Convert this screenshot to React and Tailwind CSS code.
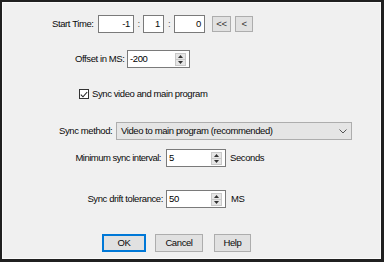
import React from 'react';

const font = { fontFamily: '"Liberation Sans", Arial, sans-serif' };

const Spinner = () => (
  <div className="flex flex-col w-[11px] h-[13px] border border-[#c9c9c9] bg-[#e6e6e6] mr-[3px]">
    <div className="flex-1 flex items-center justify-center border-b border-[#c9c9c9]">
      <svg width="5" height="3" viewBox="0 0 5 3"><path d="M0 3 L2.5 0 L5 3 Z" fill="#333" /></svg>
    </div>
    <div className="flex-1 flex items-center justify-center">
      <svg width="5" height="3" viewBox="0 0 5 3"><path d="M0 0 L2.5 3 L5 0 Z" fill="#333" /></svg>
    </div>
  </div>
);

const SpinBox = ({ value, width }) => (
  <div className={`flex items-center h-[18px] bg-white border border-[#7a7a7a] ${width}`}>
    <span className="flex-1 pl-[2px] text-black">{value}</span>
    <Spinner />
  </div>
);

const TimeBox = ({ value, width }) => (
  <div className={`flex items-center justify-end h-[18px] bg-white border border-[#7a7a7a] pr-[3px] ${width}`}>
    {value}
  </div>
);

const SmallBtn = ({ children, width }) => (
  <div className={`flex items-center justify-center h-[16px] bg-[#e1e1e1] border border-[#adadad] text-[#333] ${width}`}>
    {children}
  </div>
);

const Btn = ({ children, primary, width }) => (
  <div
    className={`flex items-center justify-center h-[18px] bg-[#e1e1e1] ${width} ${
      primary ? 'border-2 border-[#0078d7]' : 'border border-[#adadad]'
    }`}
  >
    {children}
  </div>
);

export default function App() {
  return (
    <div className="w-[384px] h-[262px] bg-[#202020] pt-[2px] pl-[2px] pr-[3px] pb-[3px]" style={font}>
      <div className="w-full h-full bg-[#f0f0f0] border border-[#fafafa] text-[9.5px] tracking-[-0.4px] whitespace-nowrap text-[#0a0a0a] leading-none flex flex-col">
        {/* Start time */}
        <div className="flex items-center mt-[12px] pl-[49px] h-[18px]">
          <span className="w-[46px]">Start Time:</span>
          <TimeBox value="-1" width="w-[36px]" />
          <span className="w-[9px] text-center text-[#555]">:</span>
          <TimeBox value="1" width="w-[21px]" />
          <span className="w-[10px] text-center text-[#555]">:</span>
          <TimeBox value="0" width="w-[31px]" />
          <SmallBtn width="w-[19px] ml-[7px]">&lt;&lt;</SmallBtn>
          <SmallBtn width="w-[18px] ml-[4px]">&lt;</SmallBtn>
        </div>

        {/* Offset */}
        <div className="flex items-center mt-[17px] pl-[72px] h-[18px]">
          <span className="w-[52px]">Offset in MS:</span>
          <SpinBox value="-200" width="w-[63px]" />
        </div>

        {/* Sync checkbox */}
        <div className="flex items-center mt-[20px] pl-[76px] h-[12px]">
          <div className="w-[10px] h-[10px] border border-[#333] bg-white flex items-center justify-center">
            <svg width="8" height="7" viewBox="0 0 8 7">
              <path d="M0.8 3.6 L3 5.8 L7.2 1" fill="none" stroke="#222" strokeWidth="1.1" />
            </svg>
          </div>
          <span className="ml-[3px]">Sync video and main program</span>
        </div>

        {/* Sync method */}
        <div className="flex items-center mt-[22px] pl-[56px] h-[18px]">
          <span className="w-[57px]">Sync method:</span>
          <div className="flex items-center w-[236px] h-[18px] bg-[#e5e5e5] border border-[#adadad] pl-[4px] pr-[4px]">
            <span className="flex-1">Video to main program (recommended)</span>
            <svg width="8" height="5" viewBox="0 0 8 5">
              <path d="M0.5 0.5 L4 4 L7.5 0.5" fill="none" stroke="#555" strokeWidth="1" />
            </svg>
          </div>
        </div>

        {/* Minimum sync interval */}
        <div className="flex items-center mt-[9px] pl-[72px] h-[18px]">
          <span className="w-[91px] text-right pr-[5px] tracking-[-0.5px]">Minimum sync interval:</span>
          <SpinBox value="5" width="w-[60px]" />
          <span className="ml-[4px]">Seconds</span>
        </div>

        {/* Drift tolerance */}
        <div className="flex items-center mt-[23px] pl-[80px] h-[18px]">
          <span className="w-[83px] text-right pr-[3px]">Sync drift tolerance:</span>
          <SpinBox value="50" width="w-[60px]" />
          <span className="ml-[5px]">MS</span>
        </div>

        {/* Buttons */}
        <div className="flex items-center mt-[26px] pl-[99px] h-[18px]">
          <Btn primary width="w-[44px]">OK</Btn>
          <Btn width="w-[48px] ml-[9px]">Cancel</Btn>
          <Btn width="w-[37px] ml-[11px]">Help</Btn>
        </div>
      </div>
    </div>
  );
}
